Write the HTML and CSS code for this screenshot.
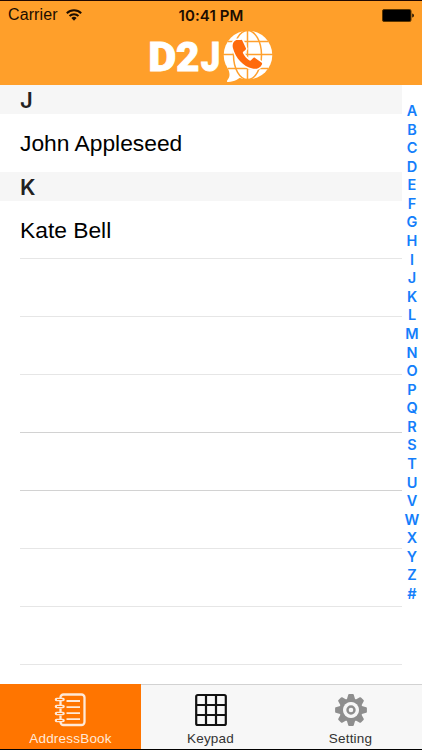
FILE: index.html
```html
<!DOCTYPE html>
<html lang="en">
<head>
    <meta charset="UTF-8">
    <meta name="viewport" content="width=device-width, initial-scale=1.0">
    <title>AddressBook</title>
    <link rel="stylesheet" href="styles.css">
</head>
<body>
    <header class="header">
        <div class="status">
            <div class="carrier">
                <span>Carrier</span>
                <svg width="16" height="12" viewBox="0 0 16 12" fill="none" stroke="#1c0d00" stroke-width="2">
                    <path d="M.8 4.2a10.2 10.2 0 0 1 14.4 0M3.5 7a6.4 6.4 0 0 1 9 0"/>
                    <path d="M8 11.7L5.4 9.1a3.7 3.7 0 0 1 5.2 0z" fill="#1c0d00" stroke="none"/>
                </svg>
            </div>
            <div class="time">10:41 PM</div>
            <svg class="battery" width="33" height="13" viewBox="0 0 33 13">
                <rect x=".5" y=".5" width="28.5" height="12" rx="1.5" stroke="#5a3500"/>
                <path d="M30.3 4.5c2 .3 2 3.8 0 4z"/>
            </svg>
        </div>
        <svg class="logo" width="124" height="54" viewBox="149 29 124 54">
            <g class="logo-text">
                <text x="148.2" y="70.7" textLength="28" lengthAdjust="spacingAndGlyphs">D</text>
                <text x="176" y="70.7" textLength="23.5" lengthAdjust="spacingAndGlyphs">2</text>
                <text x="200.8" y="70.7" textLength="19.5" lengthAdjust="spacingAndGlyphs">J</text>
            </g>
            <path fill="#fff" d="M227.5 67.500c2.500 5.500 3 9-.2 12.700-.8 1-.3 1.900 1 1.800 6.500-.4 10.500-3 13.700-6.500z"/>
            <circle cx="248" cy="55" r="24.3" fill="#fff"/>
            <g fill="none" stroke="#ffa02d" stroke-width="1.5">
                <path d="M247.500 30.500v49M223 54.500h50M228 41.500h40M228 68.500h40"/>
                <ellipse cx="247.5" cy="55" rx="14" ry="24.5"/>
            </g>
            <path id="phone" fill="#ff6a0c" stroke="#fff" stroke-width="3" paint-order="stroke" d="M236.300 40c-3.200 1.500-4.300 4.500-3.300 8.200 2.500 9.800 10.200 18.200 19.500 20.400 4 .9 7.800-.7 9.400-4.200.4-.9.200-1.500-.5-2l-6.300-4.500c-.8-.5-1.500-.4-2.100.3l-2 2c-.6.6-1.200.5-1.900.1-2.600-1.900-4.600-4.100-6.100-7-.3-.8-.2-1.400.5-1.900l1.900-1.500c.7-.5.8-1.200.4-2l-3.400-7.200c-.4-.8-.9-1.100-1.700-.8z"/>
        </svg>
    </header>

    <main class="content">
        <div class="contacts">
            <h2 class="section">J</h2>
            <div class="contact last">John Appleseed</div>
            <h2 class="section">K</h2>
            <div class="contact">Kate Bell</div>
            <div class="contact"></div>
            <div class="contact"></div>
            <div class="contact dark"></div>
            <div class="contact dark"></div>
            <div class="contact"></div>
            <div class="contact"></div>
            <div class="contact"></div>
        </div>
        <div class="index">
            <span>A</span><span>B</span><span>C</span><span>D</span><span>E</span><span>F</span><span>G</span>
            <span>H</span><span>I</span><span>J</span><span>K</span><span>L</span><span>M</span><span>N</span>
            <span>O</span><span>P</span><span>Q</span><span>R</span><span>S</span><span>T</span><span>U</span>
            <span>V</span><span>W</span><span>X</span><span>Y</span><span>Z</span><span>#</span>
        </div>
    </main>

    <nav class="tabs">
        <div class="tab active">
            <svg width="34" height="34" viewBox="0 0 34 34" fill="none" stroke="#ffe9d8" stroke-width="2.3">
                <path d="M6.500 5V4.500a3 3 0 0 1 3-3h18a3 3 0 0 1 3 3v24.500a3 3 0 0 1-3 3h-18a3 3 0 0 1-3-3M6.500 8v4M6.500 15.500v3.500M6.500 22.500v3.500"/>
                <path d="M12.500 8h13.500M12.500 14.200h13.500M12.500 20.200h13.500M12.500 26.200h13.500" stroke-width="1.8"/>
                <path d="M9 6.500H2.500M9 13.500H2.500M9 20.500H2.500M9 27.500H2.500" stroke-width="3.6" stroke-linecap="round"/>
                <path stroke="#ff7500" stroke-width="1" d="M8.500 6.500H3M8.500 13.500H3M8.500 20.500H3M8.500 27.500H3"/>
            </svg>
            <span>AddressBook</span>
        </div>
        <div class="tab">
            <svg width="34" height="34" viewBox="0 0 34 34" fill="none" stroke="#111" stroke-width="2.2">
                <rect x="2.2" y="2" width="29.6" height="30" rx="1.5"/>
                <path d="M12 2v30M22 2v30M2 12h30M2 22h30"/>
            </svg>
            <span>Keypad</span>
        </div>
        <div class="tab">
            <svg width="34" height="34" viewBox="-17 -17 34 34" fill="#8e8e8e">
                <g id="teeth">
                    <path id="tooth" d="M-4.300-10l1.500-5.200q.2-.7 1-.7h3.600q.8 0 1 .7l1.500 5.200z"/>
                    <use href="#tooth" transform="rotate(45)"/>
                    <use href="#tooth" transform="rotate(90)"/>
                    <use href="#tooth" transform="rotate(135)"/>
                </g>
                <use href="#teeth" transform="rotate(180)"/>
                <circle r="9.6" fill="none" stroke="#8e8e8e" stroke-width="4"/>
                <circle r="8" fill="#f7f7f7"/>
                <circle r="3.5" fill="none" stroke="#8e8e8e" stroke-width="2.4"/>
            </svg>
            <span>Setting</span>
        </div>
    </nav>
</body>
</html>
```
FILE: styles.css
```css
* {
    box-sizing: border-box;
}

body {
    font-family: "Liberation Sans", Arial, sans-serif;
    margin: 0;
    height: 750px;
    display: flex;
    flex-direction: column;
    background-color: #ffffff;
    color: #000;
    border-top: 1px solid #210800;
    border-bottom: 1px solid #000;
    overflow: hidden;
}

svg {
    display: block;
}

.header {
    height: 84px;
    flex: none;
    background-color: #ff9f2a;
}

.status {
    height: 28px;
    padding: 0 8px;
    display: grid;
    grid-template-columns: 1fr auto 1fr;
    align-items: center;
    font-size: 16px;
    color: #1c0d00;
}

.carrier {
    display: flex;
    align-items: center;
    gap: 8px;
    letter-spacing: 0.1px;
}

.time {
    font-family: Inter, sans-serif;
    font-weight: 600;
    font-size: 15px;
    letter-spacing: 0.1px;
}

.battery {
    justify-self: end;
    margin-right: -1px;
}

.logo {
    margin-left: 149px;
}

.logo-text {
    font-family: Roboto, sans-serif;
    font-weight: 900;
    font-size: 40px;
    fill: #fff;
    stroke: #fff;
    stroke-width: 0.8px;
}

.content {
    height: 599px;
    flex: none;
    display: flex;
}

.contacts {
    width: 402px;
}

.section {
    margin: 0;
    height: 29px;
    padding-left: 20px;
    background-color: #f6f6f6;
    color: #222;
    font-family: Inter, sans-serif;
    font-weight: 600;
    font-size: 22px;
    line-height: 31px;
}

.contact {
    height: 58px;
    margin-left: 20px;
    border-bottom: 1px solid #e6e6e6;
    font-size: 22.8px;
    line-height: 58px;
}

.contact.last {
    border-bottom: none;
}

.contact.dark {
    border-bottom-color: #d2d2d2;
}

.index {
    width: 20px;
    padding-top: 17px;
    display: flex;
    flex-direction: column;
    align-items: center;
    color: #147efb;
    font-family: Inter, sans-serif;
    font-size: 14.5px;
    font-weight: 600;
}

.index span {
    height: 18.58px;
    line-height: 18.58px;
}

.tabs {
    flex: 1;
    display: grid;
    grid-template-columns: 141px 139px 141px;
    border-top: 1px solid #d2d2d2;
    background-color: #f7f7f7;
}

.tab {
    padding-top: 8px;
    display: flex;
    flex-direction: column;
    align-items: center;
    gap: 4px;
    color: #333;
    font-size: 13.5px;
    line-height: 16px;
    letter-spacing: 0.2px;
}

.tab.active {
    margin-top: -1px;
    padding-top: 9px;
    background-color: #ff7500;
    color: #ffe9d8;
}
```
